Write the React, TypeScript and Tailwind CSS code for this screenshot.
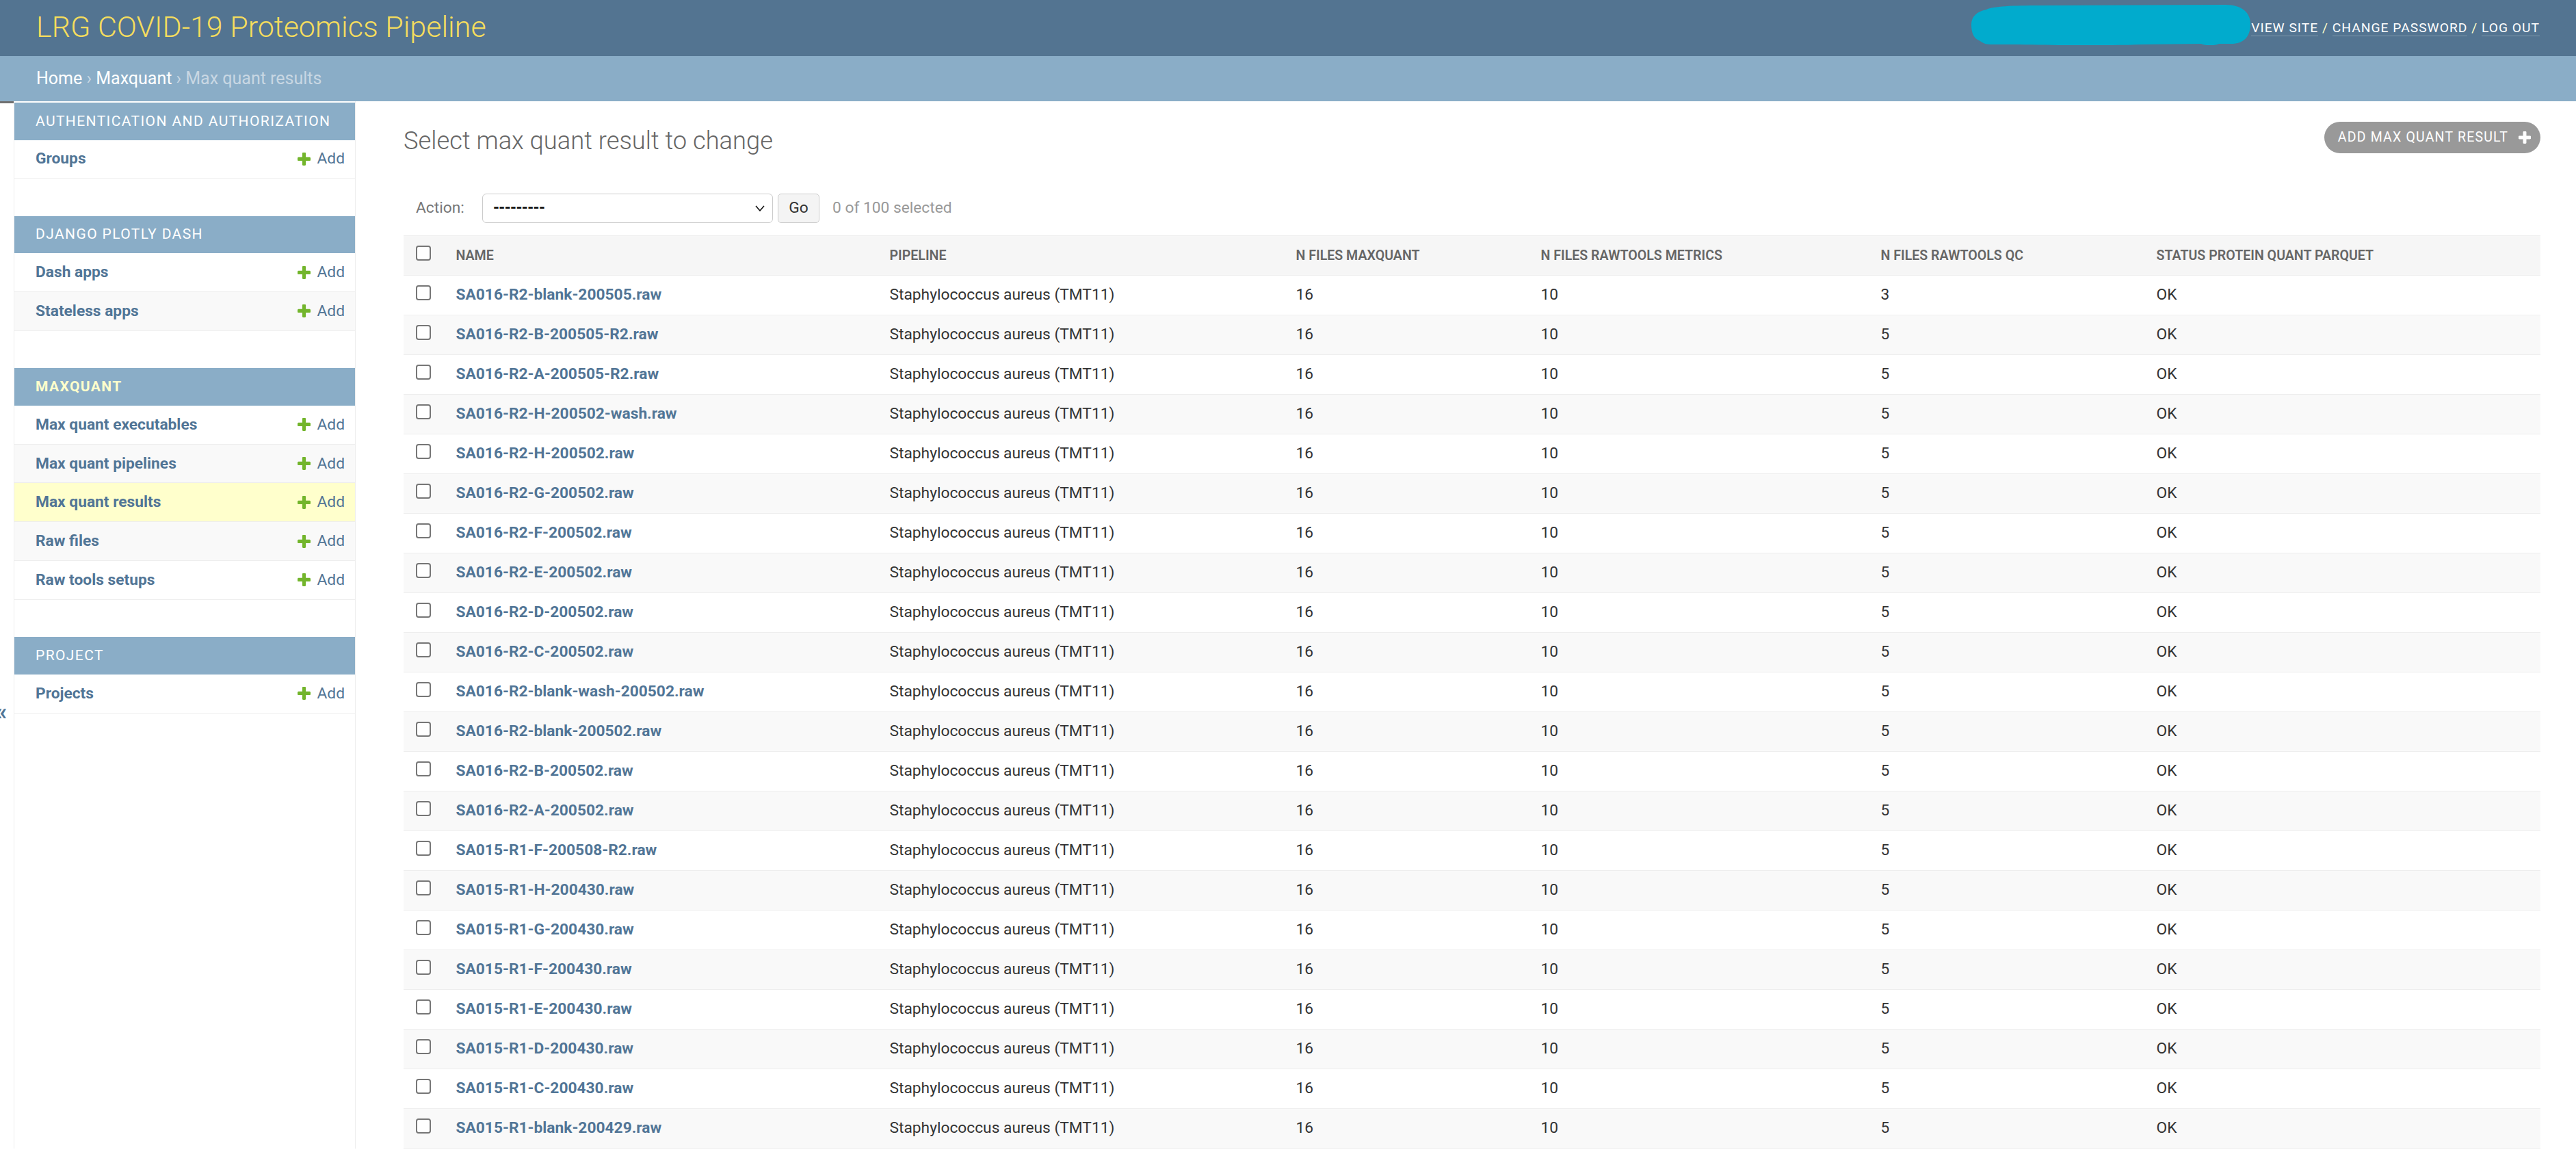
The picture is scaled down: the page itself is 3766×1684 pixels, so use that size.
import type { ReactNode } from 'react'

const PLUS_PATH =
  'M1600 796v192q0 40-28 68t-68 28h-416v416q0 40-28 68t-68 28h-192q-40 0-68-28t-28-68v-416h-416q-40 0-68-28t-28-68v-192q0-40 28-68t68-28h416v-416q0-40 28-68t68-28h192q40 0 68 28t28 68v416h416q40 0 68 28t28 68z'

function PlusIcon({ className }: { className: string }) {
  return (
    <svg viewBox="192 192 1408 1408" fill="currentColor" className={className}>
      <path d={PLUS_PATH} />
    </svg>
  )
}

function Chevron() {
  return (
    <svg viewBox="0 0 14 9" className="h-[9px] w-[14px]" fill="none" stroke="#111" strokeWidth={1.6}>
      <polyline points="1,1 7,8 13,1" />
    </svg>
  )
}

function Checkbox() {
  return <div className="mb-2 h-[22px] w-[22px] rounded-[4px] border-2 border-[#767676] bg-white" />
}

type Module = { name: string; current?: boolean; models: string[]; active?: string }

const modules: Module[] = [
  { name: 'Authentication and Authorization', models: ['Groups'] },
  { name: 'Django Plotly Dash', models: ['Dash apps', 'Stateless apps'] },
  {
    name: 'Maxquant',
    current: true,
    active: 'Max quant results',
    models: ['Max quant executables', 'Max quant pipelines', 'Max quant results', 'Raw files', 'Raw tools setups'],
  },
  { name: 'Project', models: ['Projects'] },
]

const results = [
  'SA016-R2-blank-200505.raw',
  'SA016-R2-B-200505-R2.raw',
  'SA016-R2-A-200505-R2.raw',
  'SA016-R2-H-200502-wash.raw',
  'SA016-R2-H-200502.raw',
  'SA016-R2-G-200502.raw',
  'SA016-R2-F-200502.raw',
  'SA016-R2-E-200502.raw',
  'SA016-R2-D-200502.raw',
  'SA016-R2-C-200502.raw',
  'SA016-R2-blank-wash-200502.raw',
  'SA016-R2-blank-200502.raw',
  'SA016-R2-B-200502.raw',
  'SA016-R2-A-200502.raw',
  'SA015-R1-F-200508-R2.raw',
  'SA015-R1-H-200430.raw',
  'SA015-R1-G-200430.raw',
  'SA015-R1-F-200430.raw',
  'SA015-R1-E-200430.raw',
  'SA015-R1-D-200430.raw',
  'SA015-R1-C-200430.raw',
  'SA015-R1-blank-200429.raw',
]

const GRID = 'grid grid-cols-[59px_634px_594px_358px_497px_403px_1fr] items-center'

function Cell({ children }: { children?: ReactNode }) {
  return <div className="truncate whitespace-nowrap px-[17.5px]">{children}</div>
}

function Header() {
  return (
    <header className="relative flex h-[82px] items-center justify-between bg-[#537491] px-[53px]">
      <div className="-mt-[4px] text-[43px] font-light text-[#f5dd5d]">LRG COVID-19 Proteomics Pipeline</div>
      <div className="whitespace-nowrap text-[19.25px] uppercase tracking-[1px] text-[#ffffcc]">
        <a className="border-b border-white/25 text-white">View site</a> /{' '}
        <a className="border-b border-white/25 text-white">Change password</a> /{' '}
        <a className="border-b border-white/25 text-white">Log out</a>
      </div>
      {/* redaction scribble over the username */}
      <svg viewBox="0 0 408 59" className="absolute left-[2882px] top-[7px] h-[59px] w-[408px]">
        <path
          fill="#01abcd"
          d="M22 7 C32 2 60 1 100 1 L372 0 C396 0 408 12 408 28 C408 47 398 57 380 57 L362 57 C356 60 342 60 336 57 L250 58 C200 60 120 59 60 58 L28 58 C20 58 16 55 11 52 C3 49 0 40 0 29 C0 17 8 10 22 7 Z"
        />
      </svg>
    </header>
  )
}

function Breadcrumbs() {
  return (
    <div className="flex h-[66px] items-center bg-[#8aadc7] px-[53px] text-[25px] text-[#c8d7e3]">
      <span className="whitespace-nowrap">
        <a className="text-white">Home</a> › <a className="text-white">Maxquant</a> › Max quant results
      </span>
    </div>
  )
}

function Sidebar() {
  return (
    <aside className="w-[500px] shrink-0 border-x border-[#eee] pt-[2px]">
      {modules.map((m) => (
        <div key={m.name} className="mb-[54.5px]">
          <div
            className={
              m.current
                ? 'flex h-[54.5px] items-center bg-[#8aadc7] pl-[31px] text-[21px] font-bold uppercase tracking-[1.4px] text-[#ffffcc]'
                : 'flex h-[54.5px] items-center bg-[#8aadc7] pl-[31px] text-[21px] uppercase tracking-[1.4px] text-white'
            }
          >
            {m.name}
          </div>
          {m.models.map((model, i) => (
            <div
              key={model}
              className={
                model === m.active
                  ? 'flex h-[56.8px] items-center justify-between border-b border-[#eee] bg-[#ffffcc] pl-[31px] pr-[15px] text-[22.75px] text-[#517596]'
                  : i % 2 === 1
                    ? 'flex h-[56.8px] items-center justify-between border-b border-[#eee] bg-[#f9f9f9] pl-[31px] pr-[15px] text-[22.75px] text-[#517596]'
                    : 'flex h-[56.8px] items-center justify-between border-b border-[#eee] bg-white pl-[31px] pr-[15px] text-[22.75px] text-[#517596]'
              }
            >
              <a className="font-bold">{model}</a>
              <a className="flex items-center gap-[9px]">
                <PlusIcon className="h-[19px] w-[19px] text-[#73b52c]" />
                Add
              </a>
            </div>
          ))}
        </div>
      ))}
    </aside>
  )
}

function Changelist() {
  return (
    <main className="min-w-0 flex-1 pl-[70px] pr-[52px] pt-[30px]">
      <div className="flex h-[48px] items-start justify-between">
        <h1 className="mt-[7px] text-[36.3px] font-light leading-[42px] text-[#666]">
          Select max quant result to change
        </h1>
        <a className="flex h-[46px] items-center gap-[15px] rounded-full bg-[#999] pl-[20px] pr-[14px] text-[19.5px] uppercase tracking-[1.2px] text-white">
          Add max quant result
          <PlusIcon className="h-[18px] w-[18px]" />
        </a>
      </div>

      <div className="mt-[57px] flex h-[43px] items-center pl-[18px] text-[22.75px]">
        <span className="w-[97px] shrink-0 text-[#777]">Action:</span>
        <div className="flex h-[43px] w-[425px] items-center justify-between rounded-[6px] border border-[#ccc] bg-white pl-[15px] pr-[11px]">
          <span className="font-bold tracking-[-0.6px] text-black">---------</span>
          <Chevron />
        </div>
        <div className="ml-[7px] flex h-[43px] w-[61px] items-center justify-center rounded-[5px] border border-[#ccc] bg-[#f4f4f4] text-[#333]">
          Go
        </div>
        <span className="ml-[19px] text-[#999]">0 of 100 selected</span>
      </div>

      <div className="mt-[18px]">
        <div className={`${GRID} h-[59px] border-y border-[#eee] bg-[#f6f6f6] text-[19.6px] font-semibold uppercase text-[#666]`}>
          <div className="pl-[17.5px]">
            <Checkbox />
          </div>
          <Cell>Name</Cell>
          <Cell>Pipeline</Cell>
          <Cell>N files maxquant</Cell>
          <Cell>N files rawtools metrics</Cell>
          <Cell>N files rawtools QC</Cell>
          <Cell>Status protein quant parquet</Cell>
        </div>
        {results.map((name, i) => (
          <div
            key={name}
            className={
              i % 2 === 1
                ? `${GRID} h-[58px] border-b border-[#eee] bg-[#f9f9f9] text-[22.75px] text-[#333]`
                : `${GRID} h-[58px] border-b border-[#eee] bg-white text-[22.75px] text-[#333]`
            }
          >
            <div className="pl-[17.5px]">
              <Checkbox />
            </div>
            <Cell>
              <a className="font-bold text-[#517596]">{name}</a>
            </Cell>
            <Cell>Staphylococcus aureus (TMT11)</Cell>
            <Cell>16</Cell>
            <Cell>10</Cell>
            <Cell>{i === 0 ? '3' : '5'}</Cell>
            <Cell>OK</Cell>
          </div>
        ))}
      </div>
    </main>
  )
}

export default function App() {
  return (
    <div className="h-[1684px] w-full overflow-hidden bg-white font-[Roboto,sans-serif]">
      <Header />
      <Breadcrumbs />
      <div className="flex">
        <div className="w-[20px] shrink-0 overflow-hidden border-t-[3px] border-[#6f6f6f] pt-[869px]">
          <span className="-ml-[7px] block text-[35px] font-bold leading-[41px] text-[#517596]">«</span>
        </div>
        <Sidebar />
        <Changelist />
      </div>
    </div>
  )
}
